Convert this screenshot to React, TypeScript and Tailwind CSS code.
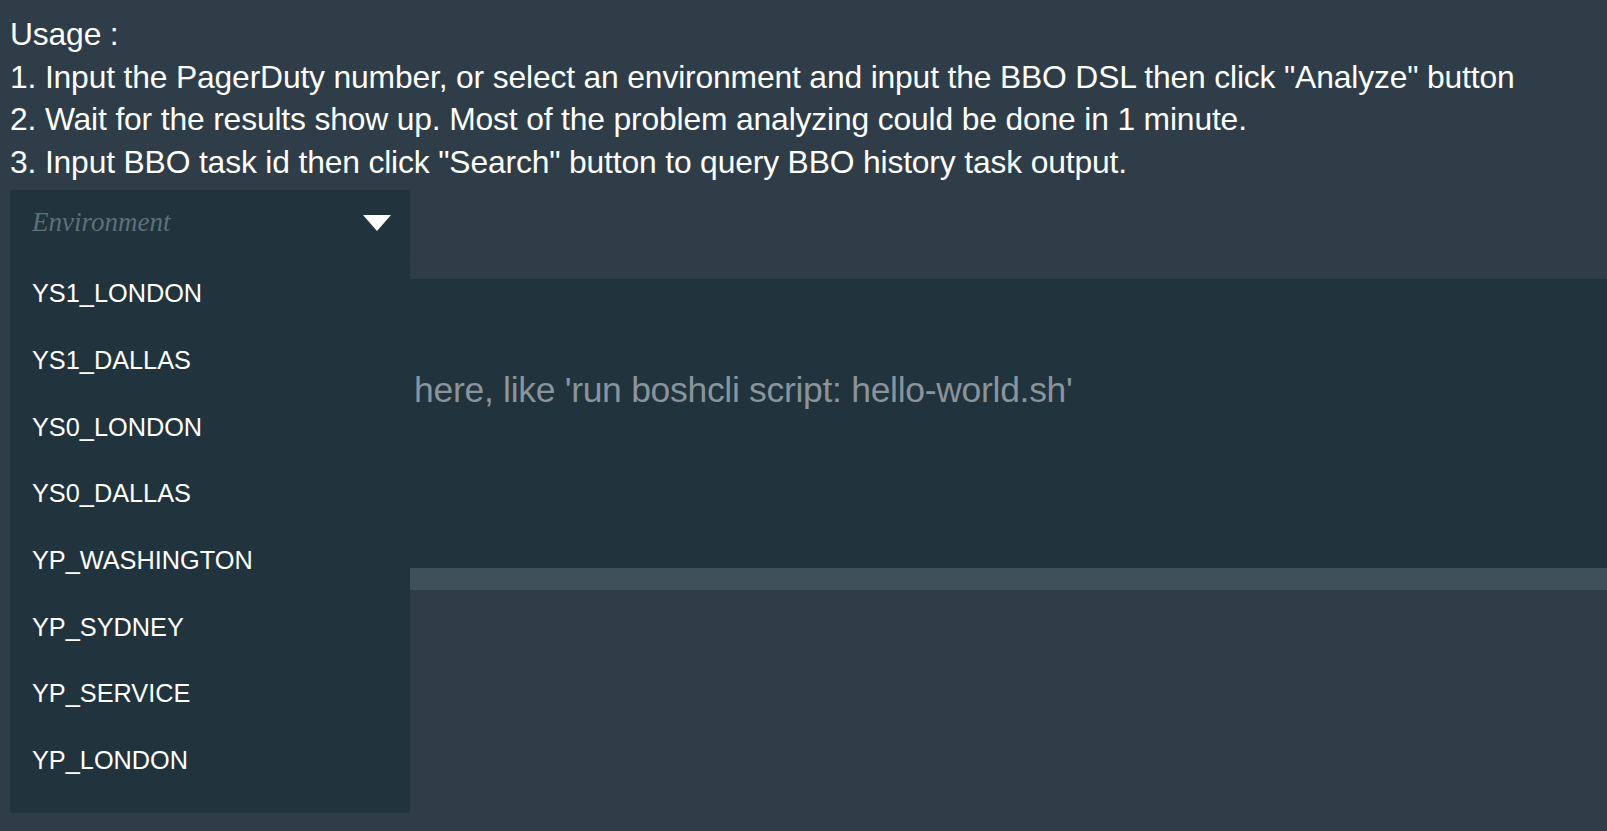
import React from "react";

const envs = [
  "YS1_LONDON",
  "YS1_DALLAS",
  "YS0_LONDON",
  "YS0_DALLAS",
  "YP_WASHINGTON",
  "YP_SYDNEY",
  "YP_SERVICE",
  "YP_LONDON",
];

export default function App() {
  return (
    <div
      className="min-h-screen w-full overflow-hidden bg-[#2e3d48] pl-[10px] pt-[13px] text-white"
      style={{ fontFamily: '"Liberation Sans", Arial, sans-serif' }}
    >
      <div className="text-[31.8px] leading-[42.6px] tracking-[-0.15px] whitespace-nowrap">
        <div>Usage :</div>
        <div>1. Input the PagerDuty number, or select an environment and input the BBO DSL then click "Analyze" button</div>
        <div>2. Wait for the results show up. Most of the problem analyzing could be done in 1 minute.</div>
        <div>3. Input BBO task id then click "Search" button to query BBO history task output.</div>
      </div>

      <div className="relative z-10 mt-[7px] h-[68px] w-[400px] bg-[#21333d]">
        <div className="flex h-full items-start justify-between pl-[22px] pr-[19px]">
          <span
            className="pt-[16px] text-[27px] italic leading-[32px] text-[#5f7079]"
            style={{ fontFamily: '"Liberation Serif", "Times New Roman", serif' }}
          >
            Environment
          </span>
          <svg className="mt-[25px]" width="28" height="16" viewBox="0 0 28 16">
            <polygon points="0,0 28,0 14,16" fill="#ffffff" />
          </svg>
        </div>
        <ul className="absolute left-0 top-[68px] w-[400px] rounded-[3px] bg-[#21333d] pb-[19px] pt-[2px]">
          {envs.map((e) => (
            <li
              key={e}
              className="h-[66.67px] pl-[22px] text-[25.3px] leading-[66.67px] text-white"
            >
              {e}
            </li>
          ))}
        </ul>
      </div>

      <div className="mt-[21px]">
        <textarea
          className="block h-[289px] w-full resize-none bg-[#21333d] pl-[99px] pt-[91px] text-[35.5px] leading-[41px] tracking-[-0.3px] text-white outline-none placeholder:text-[#89949b]"
          style={{ fontFamily: '"Liberation Sans", Arial, sans-serif' }}
          placeholder="Input the BBO DSL here, like 'run boshcli script: hello-world.sh'"
        />
        <div className="h-[22px] w-full bg-[#40505a]" />
      </div>
    </div>
  );
}
